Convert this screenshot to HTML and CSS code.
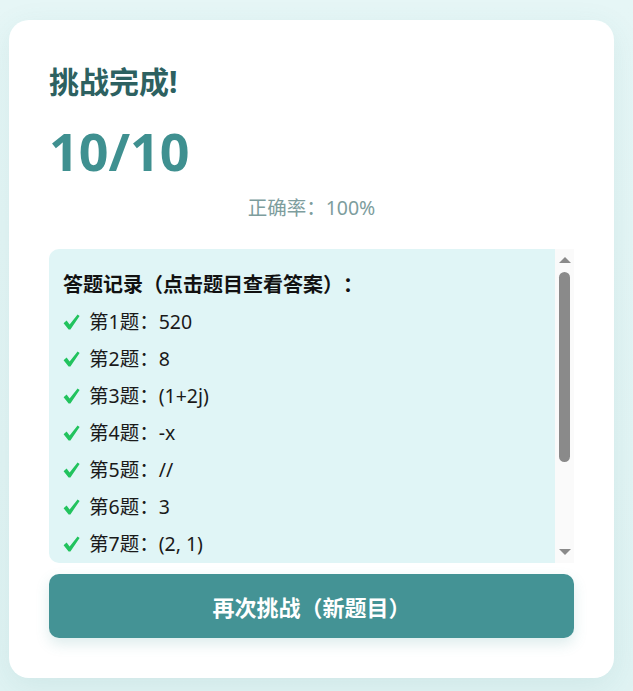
FILE: index.html
```html
<!DOCTYPE html>
<html lang="zh">
<head>
<meta charset="utf-8">
<link rel="stylesheet" href="styles.css">
</head>
<body>
<div class="card">
  <h2 class="title">挑战完成!</h2>
  <div class="score">10/10</div>
  <div class="accuracy">正确率：100%</div>
  <div class="records">
    <div class="records-body">
      <div class="records-head">答题记录（点击题目查看答案）：</div>
      <div class="item"><svg class="check" viewBox="0 0 17 16"><path d="M0.6 9.2 L3.6 6.6 L6.6 10.6 L14.6 0.4 L16.6 1.9 L7.4 15.4 L5.6 15.4 Z"/></svg>第1题：520</div>
      <div class="item"><svg class="check" viewBox="0 0 17 16"><path d="M0.6 9.2 L3.6 6.6 L6.6 10.6 L14.6 0.4 L16.6 1.9 L7.4 15.4 L5.6 15.4 Z"/></svg>第2题：8</div>
      <div class="item"><svg class="check" viewBox="0 0 17 16"><path d="M0.6 9.2 L3.6 6.6 L6.6 10.6 L14.6 0.4 L16.6 1.9 L7.4 15.4 L5.6 15.4 Z"/></svg>第3题：(1+2j)</div>
      <div class="item"><svg class="check" viewBox="0 0 17 16"><path d="M0.6 9.2 L3.6 6.6 L6.6 10.6 L14.6 0.4 L16.6 1.9 L7.4 15.4 L5.6 15.4 Z"/></svg>第4题：-x</div>
      <div class="item"><svg class="check" viewBox="0 0 17 16"><path d="M0.6 9.2 L3.6 6.6 L6.6 10.6 L14.6 0.4 L16.6 1.9 L7.4 15.4 L5.6 15.4 Z"/></svg>第5题：//</div>
      <div class="item"><svg class="check" viewBox="0 0 17 16"><path d="M0.6 9.2 L3.6 6.6 L6.6 10.6 L14.6 0.4 L16.6 1.9 L7.4 15.4 L5.6 15.4 Z"/></svg>第6题：3</div>
      <div class="item"><svg class="check" viewBox="0 0 17 16"><path d="M0.6 9.2 L3.6 6.6 L6.6 10.6 L14.6 0.4 L16.6 1.9 L7.4 15.4 L5.6 15.4 Z"/></svg>第7题：(2, 1)</div>
    </div>
    <div class="scrollbar">
      <div class="arrow arrow-up"></div>
      <div class="track"><div class="thumb"></div></div>
      <div class="arrow arrow-down"></div>
    </div>
  </div>
  <button class="retry">再次挑战（新题目）</button>
</div>
</body>
</html>
```

FILE: styles.css
```css
html, body {
  margin: 0;
  padding: 0;
}
body {
  background: linear-gradient(180deg, #e6f6f6 0%, #e0f3f3 100%);
  font-family: "Noto Sans", "Noto Sans CJK SC", sans-serif;
  min-height: 691px;
  overflow: hidden;
  text-spacing-trim: space-all;
}
.card {
  margin: 20px 19px 0 9px;
  padding: 40px;
  background: #ffffff;
  border-radius: 20px;
  box-shadow: 0 8px 30px rgba(60, 140, 140, 0.10);
}
.title {
  margin: 0;
  font-size: 30px;
  line-height: 44px;
  font-weight: 700;
  color: #2d6161;
}
.score {
  margin-top: 15px;
  font-size: 52px;
  line-height: 64px;
  font-weight: 700;
  color: #3f9090;
}
.accuracy {
  margin-top: 12px;
  text-align: center;
  font-size: 19.5px;
  line-height: 26px;
  color: #7d9d9d;
}
.records {
  margin-top: 28px;
  height: 314px;
  display: flex;
}
.records-body {
  flex: 1;
  overflow: hidden;
  background: #e0f5f6;
  border-radius: 10px 0 0 10px;
  padding: 23px 14px 0 14px;
}
.records-head {
  font-size: 20px;
  font-weight: 700;
  line-height: 26px;
  color: #111111;
  margin-bottom: 11px;
  white-space: nowrap;
}
.item {
  font-size: 19.5px;
  line-height: 25px;
  color: #1a1a1a;
  margin-bottom: 12px;
  display: flex;
  align-items: center;
  white-space: nowrap;
}
.check {
  width: 17px;
  height: 16px;
  margin-right: 9px;
  fill: #22c35e;
  flex: none;
}
.scrollbar {
  width: 19px;
  background: #fafafa;
  display: flex;
  flex-direction: column;
  align-items: center;
}
.arrow {
  width: 0;
  height: 0;
  border-left: 6px solid transparent;
  border-right: 6px solid transparent;
}
.arrow-up {
  margin-top: 8px;
  border-bottom: 6px solid #8a8a8a;
}
.arrow-down {
  margin-bottom: 8px;
  border-top: 6px solid #8a8a8a;
}
.track {
  flex: 1;
  width: 100%;
  display: flex;
  justify-content: center;
  padding-top: 9px;
}
.thumb {
  width: 11px;
  height: 190px;
  border-radius: 6px;
  background: #8a8a8a;
}
.retry {
  display: block;
  width: 100%;
  margin-top: 11px;
  height: 64px;
  border: none;
  border-radius: 10px;
  background: #449395;
  color: #ffffff;
  font-family: "Noto Sans CJK SC", sans-serif;
  font-size: 22px;
  font-weight: 700;
  text-spacing-trim: space-all;
  box-shadow: 0 6px 14px rgba(68, 147, 149, 0.18);
}
```
